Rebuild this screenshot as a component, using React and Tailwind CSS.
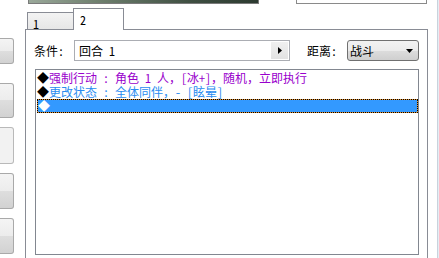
export default function App() {
  const btn =
    "w-[14px] rounded-r-[3px] border border-l-0 border-[#a9a9a9] bg-[linear-gradient(to_bottom,#f4f4f4,#ececec_50%,#dedede_50%,#d2d2d2)]";
  return (
    <div className="flex h-[258px] w-[439px] overflow-hidden bg-white font-['Noto_Sans_Mono_CJK_SC','Noto_Sans_CJK_SC',sans-serif] text-[12px] leading-[14px] text-black">
      {/* left buttons */}
      <div className="flex w-[14px] shrink-0 flex-col">
        <div className={`mt-[38px] h-[26px] ${btn}`} />
        <div className={`mt-[19px] h-[35px] ${btn}`} />
        <div className="mt-[9px] h-[37px] w-[14px] rounded-r-[3px] border border-l-0 border-[#b9b9b9] bg-[#f2f2f2]" />
        <div className={`mt-[9px] h-[36px] ${btn}`} />
        <div className={`mt-[9px] h-[36px] ${btn}`} />
      </div>

      {/* middle column */}
      <div className="ml-[11px] flex w-[403px] shrink-0 flex-col">
        {/* top strips */}
        <div className="flex h-[4px] shrink-0">
          <div className="ml-[3px] h-[4px] w-[231px] border-x border-b border-[#7a7a7a] bg-[linear-gradient(to_right,#9aa89a,#6f806f_30%,#3f4f42_70%,#2c3a30)]" />
          <div className="ml-[37px] h-[4px] w-[131px] border-x border-b border-[#8a8a8a] bg-white" />
        </div>
        {/* tabs */}
        <div className="flex h-[26px] shrink-0 items-end">
          <div className="ml-[2px] h-[18px] w-[46px] border-l border-t border-[#898c95] bg-[linear-gradient(to_bottom,#f3f3f3,#e6e6e6)] pl-[5px] pt-[4px]">
            1
          </div>
          <div className="relative z-10 h-[22px] w-[51px] border-x border-t border-[#898c95] bg-white pl-[6px] pt-[4px]">
            2
          </div>
        </div>
        {/* panel */}
        <div className="-mt-px flex flex-1 flex-col border-x border-t border-[#898c95] bg-white">
          <div className="mt-[10px] flex h-[21px] items-center">
            <div className="w-[48px] pl-[8px]">条件:</div>
            <div className="flex h-[21px] w-[216px] items-center border border-[#abadb3] bg-white">
              <div className="flex-1 pl-[4px]">回合 1</div>
              <div className="mr-px flex h-[17px] w-[17px] items-center justify-center bg-[linear-gradient(to_bottom,#f0f0f0,#e2e2e2)]">
                <svg width="4" height="7" viewBox="0 0 4 7">
                  <path d="M0 0 L4 3.5 L0 7 Z" fill="#000" />
                </svg>
              </div>
            </div>
            <div className="ml-[17px] w-[40px]">距离:</div>
            <div className="flex h-[21px] w-[72px] items-center rounded-[3px] border border-[#707070] bg-[linear-gradient(to_bottom,#f2f2f2,#ebebeb_50%,#dddddd_50%,#cfcfcf)]">
              <div className="flex-1 pl-[2px]">战斗</div>
              <svg className="mr-[5px]" width="7" height="4" viewBox="0 0 7 4">
                <path d="M0 0 L7 0 L3.5 4 Z" fill="#000" />
              </svg>
            </div>
          </div>
          <div className="ml-[9px] mt-[8px] flex h-[186px] w-[384px] flex-col border border-[#828790] bg-white pl-px pt-px">
            <div className="flex h-[14px] whitespace-pre">
              <div className="h-[14px] text-black">◆</div>
              <div className="h-[14px] text-[#9900cc]">强制行动 : 角色 1 人，[冰+]，随机，立即执行</div>
            </div>
            <div className="flex h-[14px] whitespace-pre">
              <div className="h-[14px] text-black">◆</div>
              <div className="h-[14px] text-[#2a8cf0]">更改状态 : 全体同伴，- [眩晕]</div>
            </div>
            <div className="h-[14px] border border-dotted border-black bg-[#e09030]">
              <div className="h-full bg-[#3399ff] leading-[12px] text-white">◆</div>
            </div>
          </div>
        </div>
      </div>

      {/* right edge */}
      <div className="ml-[9px] h-full w-px shrink-0 bg-[#c9d3dd]" />
      <div className="h-full w-px shrink-0 bg-[#e6edf4]" />
    </div>
  );
}
